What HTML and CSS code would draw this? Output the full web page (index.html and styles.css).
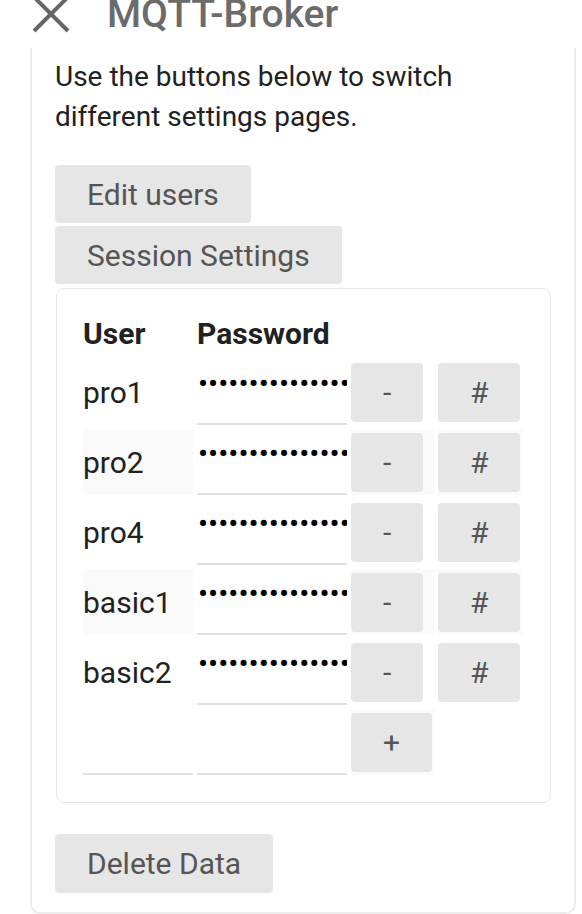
FILE: index.html
```html
<!DOCTYPE html>
<html lang="en">
<head>
<meta charset="utf-8">
<title>MQTT-Broker</title>
<link rel="stylesheet" href="styles.css">
</head>
<body>
<header class="topbar">
  <svg class="close-icon" width="38" height="38" viewBox="0 0 38 38" aria-hidden="true">
    <path d="M2 2 L36 36 M36 2 L2 36" stroke="#666" stroke-width="4" fill="none"/>
  </svg>
  <h1 class="title">MQTT-Broker</h1>
</header>
<main class="panel">
  <p class="intro">Use the buttons below to switch different settings pages.</p>
  <div class="nav-buttons">
    <button class="btn">Edit users</button>
    <button class="btn">Session Settings</button>
  </div>
  <section class="card">
    <table class="users">
      <thead>
        <tr><th class="col-user">User</th><th class="col-pass">Password</th><th></th><th></th></tr>
      </thead>
      <tbody>
        <tr>
          <td class="col-user">pro1</td>
          <td class="col-pass"><input class="field" type="password" value="passwordpassword12"></td>
          <td class="col-del"><button class="btn btn-sm">-</button></td>
          <td class="col-hash"><button class="btn btn-sm">#</button></td>
        </tr>
        <tr class="stripe">
          <td class="col-user">pro2</td>
          <td class="col-pass"><input class="field" type="password" value="passwordpassword12"></td>
          <td class="col-del"><button class="btn btn-sm">-</button></td>
          <td class="col-hash"><button class="btn btn-sm">#</button></td>
        </tr>
        <tr>
          <td class="col-user">pro4</td>
          <td class="col-pass"><input class="field" type="password" value="passwordpassword12"></td>
          <td class="col-del"><button class="btn btn-sm">-</button></td>
          <td class="col-hash"><button class="btn btn-sm">#</button></td>
        </tr>
        <tr class="stripe">
          <td class="col-user">basic1</td>
          <td class="col-pass"><input class="field" type="password" value="passwordpassword12"></td>
          <td class="col-del"><button class="btn btn-sm">-</button></td>
          <td class="col-hash"><button class="btn btn-sm">#</button></td>
        </tr>
        <tr>
          <td class="col-user">basic2</td>
          <td class="col-pass"><input class="field" type="password" value="passwordpassword12"></td>
          <td class="col-del"><button class="btn btn-sm">-</button></td>
          <td class="col-hash"><button class="btn btn-sm">#</button></td>
        </tr>
        <tr class="stripe">
          <td class="col-user"><input class="field field-user" type="text" value=""></td>
          <td class="col-pass"><input class="field" type="password" value=""></td>
          <td class="col-del"><button class="btn btn-sm btn-add">+</button></td>
        </tr>
      </tbody>
    </table>
  </section>
  <button class="btn btn-delete">Delete Data</button>
</main>
</body>
</html>
```
FILE: styles.css
```css
html, body {
  margin: 0;
  padding: 0;
  background: #fff;
}
body {
  font-family: Roboto, "Liberation Sans", sans-serif;
  color: #212121;
  overflow: hidden;
}
.topbar {
  display: flex;
  align-items: center;
  height: 68px;
  margin-top: -20px;
  padding-left: 32px;
  gap: 37px;
}
.close-icon {
  display: block;
  flex: none;
}
.title {
  margin: 0;
  font-size: 39px;
  line-height: 1;
  font-weight: 500;
  color: #6b6b6b;
  white-space: nowrap;
}
.panel {
  display: flex;
  flex-direction: column;
  align-items: flex-start;
  margin: 0 6px 0 30px;
  border: 2px solid #ececec;
  border-top: none;
  border-radius: 0 0 10px 10px;
  padding: 9px 21px 19px 23px;
}
.intro {
  margin: 0;
  font-size: 28px;
  line-height: 40px;
  color: #212121;
  max-width: 470px;
}
.nav-buttons {
  display: flex;
  flex-direction: column;
  align-items: flex-start;
  gap: 3px;
  margin-top: 28px;
}
.btn {
  height: 58px;
  padding: 0 32px;
  border: none;
  border-radius: 4px;
  background: #e6e6e6;
  color: #555;
  font-family: Roboto, "Liberation Sans", sans-serif;
  font-size: 30px;
  cursor: pointer;
}
.card {
  align-self: stretch;
  margin: 4px 2px 0 1px;
  border: 1px solid #e8e8e8;
  border-radius: 8px;
  padding: 20px 22px 23px 22px;
}
.users {
  border-collapse: separate;
  border-spacing: 4px;
}
.users th {
  text-align: left;
  font-size: 30px;
  line-height: 42px;
  font-weight: 700;
  color: #212121;
  padding: 0;
}
.users td {
  height: 66px;
  padding: 0;
  vertical-align: middle;
  font-size: 30px;
  color: #212121;
}
.users tr.stripe td {
  background: #fafafa;
}
.col-user { width: 110px; }
.col-pass { width: 150px; }
.col-del { width: 83px; }
.col-hash { width: 85px; }
.field {
  display: block;
  width: 150px;
  height: 66px;
  box-sizing: border-box;
  border: none;
  border-bottom: 2px solid #e0e0e0;
  padding: 0 0 16px 1px;
  margin: 0;
  font-family: Roboto, "Liberation Sans", sans-serif;
  font-size: 30px;
  color: #000;
  background: #fff;
  outline: none;
}
.field-user {
  width: 110px;
}
.btn-sm {
  display: block;
  height: 59px;
}
.btn-add {
  width: 81px;
  padding: 0;
}
.btn-delete {
  margin-top: 31px;
  height: 59px;
}
```
